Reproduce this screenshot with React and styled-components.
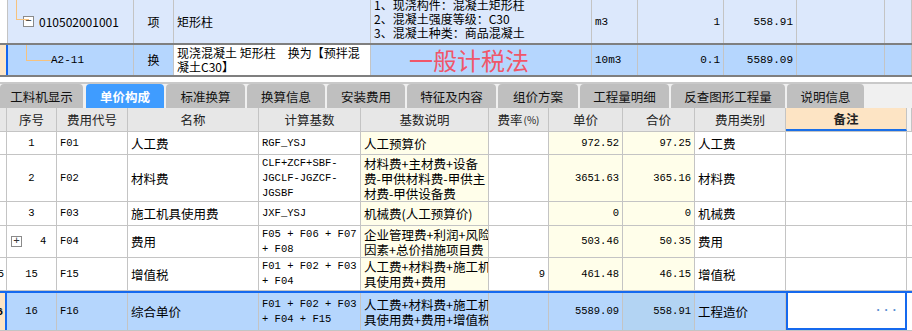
import React from "react";
import styled, { createGlobalStyle } from "styled-components";

const GlobalStyle = createGlobalStyle`
  html, body {
    margin: 0;
    padding: 0;
    background: #ffffff;
    overflow: hidden;
  }
  body {
    font-family: "Liberation Mono", "Noto Sans CJK SC", monospace;
    font-size: 12px;
    color: #000;
  }
`;

const CJK = `"Noto Sans CJK SC", "Liberation Sans", sans-serif`;
const MONO = `"Liberation Mono", "Noto Sans CJK SC", monospace`;
const LINE = "#c4c4c4";

const Page = styled.div`
  width: 912px;
  height: 331px;
  overflow: hidden;
  display: flex;
  flex-direction: column;
`;

/* ---------- upper grid (清单 / 定额) ---------- */

const UpperRow = styled.div`
  display: grid;
  grid-template-columns: 8px 126px 40px 197px 221px 46px 86px 73px 88px 1fr;
  height: ${(p) => p.$h}px;
  box-sizing: border-box;
  background: ${(p) => p.$bg};
  border-top: ${(p) => (p.$boxed ? "2px solid #7f7f7f" : "none")};
  border-bottom: ${(p) => (p.$boxed ? "2px solid #7f7f7f" : "none")};
`;

const UCell = styled.div`
  box-sizing: border-box;
  border-right: 1px solid ${LINE};
  display: flex;
  align-items: ${(p) => p.$v || "center"};
  justify-content: ${(p) =>
    p.$align === "right" ? "flex-end" : p.$align === "center" ? "center" : "flex-start"};
  padding: ${(p) => p.$pad || "0 3px"};
  background: ${(p) => p.$bg || "transparent"};
  font-family: ${(p) => (p.$mono ? MONO : CJK)};
  font-size: ${(p) => (p.$mono ? "11px" : "12px")};
  line-height: 14px;
  position: relative;
  overflow: hidden;
  white-space: nowrap;
`;

const Gutter = styled.div`
  box-sizing: border-box;
  background: ${(p) => p.$bg || "#fff"};
  border-right: ${(p) => p.$edge || `1px solid ${LINE}`};
  position: relative;
`;

const TreeLine = styled.span`
  position: absolute;
  border-left: 1px solid #f6c27e;
  border-bottom: 1px solid #f6c27e;
  left: ${(p) => p.$x}px;
  top: ${(p) => p.$top}px;
  width: ${(p) => p.$w}px;
  height: ${(p) => p.$h}px;
`;

const ToggleBox = styled.span`
  width: 11px;
  height: 11px;
  box-sizing: border-box;
  border: 1px solid #8a8a8a;
  background: #fff;
  display: inline-flex;
  align-items: center;
  justify-content: center;
  font-family: ${MONO};
  font-size: 11px;
  line-height: 1;
  color: #333;
  margin-left: ${(p) => p.$ml || 0}px;
  margin-right: ${(p) => p.$mr || 4}px;
  flex: none;
`;

const Code = styled.span`
  margin-left: ${(p) => p.$ml || 0}px;
`;

const Feature = styled.div`
  white-space: pre;
  padding-bottom: 3px;
`;

const TaxMethod = styled.span`
  font-family: ${CJK};
  font-size: 24px;
  color: #f0566a;
  line-height: 1;
`;

/* ---------- tabs ---------- */

const Spacer = styled.div`
  height: 9px;
  background: #fff;
  border-bottom: 2px solid #c9c9c9;
`;

const TabBar = styled.div`
  height: 29px;
  background: #f0f0f0;
  display: flex;
  align-items: flex-end;
  gap: 2px;
  box-sizing: border-box;
`;

const Tab = styled.div`
  width: ${(p) => p.$w}px;
  height: 24px;
  flex: none;
  border-radius: 4px 4px 0 0;
  background: ${(p) => (p.$active ? "#3f9cff" : "#bfbfbf")};
  color: ${(p) => (p.$active ? "#fff" : "#111")};
  font-weight: ${(p) => (p.$active ? 700 : 400)};
  font-family: ${CJK};
  font-size: 12.5px;
  display: flex;
  align-items: center;
  justify-content: center;
  margin-left: ${(p) => p.$ml || 0}px;
`;

/* ---------- fee table ---------- */

const COLS = "7px 50px 71px 131px 102px 128px 60px 74px 72px 91px 121px 1fr";

const Row = styled.div`
  display: grid;
  grid-template-columns: ${COLS};
  height: ${(p) => p.$h}px;
  flex: none;
  box-sizing: border-box;
  border-bottom: 1px solid ${LINE};
  border-top: ${(p) => (p.$selected ? "2px solid #1569ee" : "none")};
  background: ${(p) => (p.$selected ? "#b5d6fd" : "#fff")};
`;

const Head = styled(Row)`
  background: #e7e7e7;
  border-bottom: 1px solid ${LINE};
`;

const HCell = styled.div`
  box-sizing: border-box;
  border-right: 1px solid ${LINE};
  display: flex;
  align-items: center;
  justify-content: center;
  font-family: ${CJK};
  font-size: 12.5px;
  color: #222;
  background: ${(p) => p.$bg || "transparent"};
  font-weight: ${(p) => (p.$bold ? 700 : 400)};
  border-bottom: ${(p) => (p.$underline ? "2px solid #1a6fe8" : "none")};
`;

const Small = styled.span`
  font-size: 10px;
  margin-left: 1px;
`;

const Cell = styled.div`
  box-sizing: border-box;
  border-right: 1px solid ${LINE};
  display: flex;
  align-items: center;
  justify-content: ${(p) =>
    p.$align === "right" ? "flex-end" : p.$align === "center" ? "center" : "flex-start"};
  padding: 0 3px;
  background: ${(p) => p.$bg || "transparent"};
  font-family: ${(p) => (p.$mono ? MONO : CJK)};
  font-size: ${(p) => (p.$mono ? "10.5px" : "12.5px")};
  line-height: 15px;
  white-space: nowrap;
  overflow: hidden;
`;

const Lines = styled.div`
  display: flex;
  flex-direction: column;
`;

const RowNo = styled.div`
  box-sizing: border-box;
  border-right: ${(p) => (p.$selected ? "2px solid #1569ee" : `1px solid ${LINE}`)};
  background: ${(p) => (p.$selected ? "#fde4c4" : "#fff")};
  display: flex;
  align-items: center;
  justify-content: flex-end;
  font-family: ${MONO};
  font-size: 11px;
  font-weight: ${(p) => (p.$selected ? 700 : 400)};
  overflow: hidden;
  padding-right: 2px;
`;

const NoteEdit = styled.div`
  box-sizing: border-box;
  background: #fff;
  border: 2px solid #1569ee;
  border-top: none;
  display: flex;
  align-items: center;
  justify-content: flex-end;
  padding-right: 6px;
  color: #5a8fd2;
  font-family: ${MONO};
  font-size: 12px;
  font-weight: 700;
  letter-spacing: 1px;
`;

const YELLOW = "#fffeea";
const SEL_YELLOW = "#b3d4f3";

const tabs = [
  { t: "工料机显示", w: 83 },
  { t: "单价构成", w: 78, active: true, ml: 1 },
  { t: "标准换算", w: 79 },
  { t: "换算信息", w: 78 },
  { t: "安装费用", w: 78 },
  { t: "特征及内容", w: 89 },
  { t: "组价方案", w: 80 },
  { t: "工程量明细", w: 89 },
  { t: "反查图形工程量", w: 114 },
  { t: "说明信息", w: 77 },
];

const rows = [
  { h: 23, no: "1", code: "F01", name: "人工费", base: ["RGF_YSJ"], desc: ["人工预算价"], rate: "", price: "972.52", total: "97.25", kind: "人工费" },
  {
    h: 47, no: "2", code: "F02", name: "材料费",
    base: ["CLF+ZCF+SBF-", "JGCLF-JGZCF-", "JGSBF"],
    desc: ["材料费+主材费+设备", "费-甲供材料费-甲供主", "材费-甲供设备费"],
    rate: "", price: "3651.63", total: "365.16", kind: "材料费",
  },
  { h: 24, no: "3", code: "F03", name: "施工机具使用费", base: ["JXF_YSJ"], desc: ["机械费(人工预算价)"], rate: "", price: "0", total: "0", kind: "机械费" },
  {
    h: 32, no: "4", code: "F04", name: "费用", toggle: true,
    base: ["F05 + F06 + F07", "+ F08"], desc: ["企业管理费+利润+风险", "因素+总价措施项目费"],
    rate: "", price: "503.46", total: "50.35", kind: "费用",
  },
  {
    h: 33, no: "15", code: "F15", name: "增值税", gutter: "5",
    base: ["F01 + F02 + F03", "+ F04"], desc: ["人工费+材料费+施工机", "具使用费+费用"],
    rate: "9", price: "461.48", total: "46.15", kind: "增值税",
  },
  {
    h: 40, no: "16", code: "F16", name: "综合单价", gutter: "6", selected: true,
    base: ["F01 + F02 + F03", "+ F04 + F15"], desc: ["人工费+材料费+施工机", "具使用费+费用+增值税"],
    rate: "", price: "5589.09", total: "558.91", kind: "工程造价",
  },
];

const FeeRow = ({ r }) => {
  const yellow = r.selected ? SEL_YELLOW : YELLOW;
  return (
    <Row $h={r.h} $selected={r.selected}>
      <RowNo $selected={r.selected}>{r.gutter || ""}</RowNo>
      <Cell $mono $align={r.toggle ? "left" : "center"}>
        {r.toggle ? (
          <>
            <ToggleBox $ml={1} $mr={18}>+</ToggleBox>
            <span>{r.no}</span>
          </>
        ) : (
          r.no
        )}
      </Cell>
      <Cell $mono>{r.code}</Cell>
      <Cell>{r.name}</Cell>
      <Cell $mono>
        <Lines>
          {r.base.map((l) => (
            <span key={l}>{l}</span>
          ))}
        </Lines>
      </Cell>
      <Cell $bg={r.selected ? "transparent" : YELLOW}>
        <Lines>
          {r.desc.map((l) => (
            <span key={l}>{l}</span>
          ))}
        </Lines>
      </Cell>
      <Cell $mono $align="right">{r.rate}</Cell>
      <Cell $mono $align="right" $bg={r.selected ? "transparent" : yellow}>
        {r.price}
      </Cell>
      <Cell $mono $align="right" $bg={yellow}>
        {r.total}
      </Cell>
      <Cell>{r.kind}</Cell>
      {r.selected ? <NoteEdit>···</NoteEdit> : <Cell $bg="#fff" />}
      <Cell $bg="#fff" />
    </Row>
  );
};

export default function App() {
  return (
    <>
      <GlobalStyle />
      <Page>
        <UpperRow $h={43} $bg="#dce8fc">
          <Gutter />
          <UCell>
            <TreeLine $x={8} $top={0} $w={12} $h={19} />
            <ToggleBox $ml={12} $mr={5}>−</ToggleBox>
            <Code>010502001001</Code>
          </UCell>
          <UCell $align="center">项</UCell>
          <UCell>矩形柱</UCell>
          <UCell $v="flex-end">
            <Feature>
              {"1、现浇构件：混凝土矩形柱\n2、混凝土强度等级：C30\n3、混凝土种类：商品混凝土"}
            </Feature>
          </UCell>
          <UCell $mono>m3</UCell>
          <UCell $mono $align="right">1</UCell>
          <UCell $mono $align="right">558.91</UCell>
          <UCell />
          <UCell />
        </UpperRow>

        <UpperRow $h={34} $bg="#b5d6fe" $boxed>
          <Gutter $bg="#fde6c8" $edge="2px solid #1466f0" />
          <UCell $mono>
            <TreeLine $x={18} $top={-2} $w={24} $h={17} />
            <Code $ml={40}>A2-11</Code>
          </UCell>
          <UCell $align="center">换</UCell>
          <UCell $bg="#fff" $v="flex-start" $pad="1px 3px 0">
            <Feature>{"现浇混凝土 矩形柱　换为【预拌混\n凝土C30】"}</Feature>
          </UCell>
          <UCell $pad="0 0 0 38px">
            <TaxMethod>一般计税法</TaxMethod>
          </UCell>
          <UCell $mono>10m3</UCell>
          <UCell $mono $align="right">0.1</UCell>
          <UCell $mono $align="right">5589.09</UCell>
          <UCell />
          <UCell />
        </UpperRow>

        <Spacer />

        <TabBar>
          {tabs.map((t) => (
            <Tab key={t.t} $w={t.w} $active={t.active} $ml={t.ml}>
              {t.t}
            </Tab>
          ))}
        </TabBar>

        <Head $h={24}>
          <HCell />
          <HCell>序号</HCell>
          <HCell>费用代号</HCell>
          <HCell>名称</HCell>
          <HCell>计算基数</HCell>
          <HCell>基数说明</HCell>
          <HCell>
            费率<Small>(%)</Small>
          </HCell>
          <HCell>单价</HCell>
          <HCell>合价</HCell>
          <HCell>费用类别</HCell>
          <HCell $bg="#fde4c4" $bold $underline>
            备注
          </HCell>
          <HCell $bg="#f4f4f4" />
        </Head>

        {rows.map((r) => (
          <FeeRow key={r.code} r={r} />
        ))}
      </Page>
    </>
  );
}
